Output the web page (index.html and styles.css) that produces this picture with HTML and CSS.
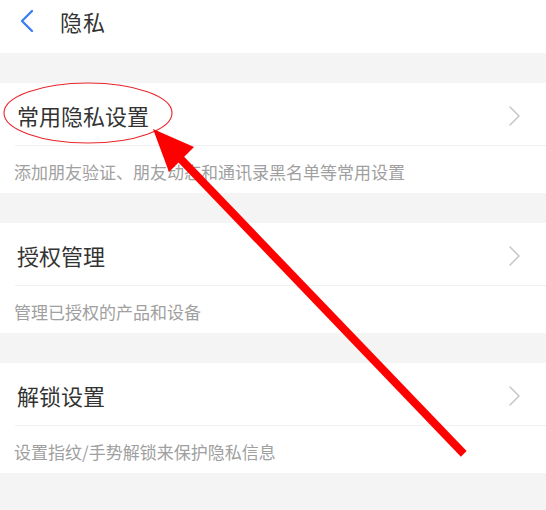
FILE: index.html
```html
<!DOCTYPE html>
<html lang="zh-CN">
<head>
<meta charset="utf-8">
<title>隐私</title>
<link rel="stylesheet" href="styles.css">
</head>
<body>
<div class="page">
  <header class="nav">
    <svg class="back" width="16" height="24" viewBox="0 0 16 24"><path d="M13 2 L3 12 L13 22" fill="none" stroke="#3d7ff5" stroke-width="2.4" stroke-linecap="round" stroke-linejoin="round"/></svg>
    <h1 class="nav-title">隐私</h1>
  </header>
  <div class="gap"></div>
  <section class="group">
    <div class="row"><span class="row-title">常用隐私设置</span><svg class="chev" width="14" height="22" viewBox="0 0 14 22"><path d="M2 2 L11 11 L2 20" fill="none" stroke="#c8c8c8" stroke-width="1.6" stroke-linecap="round" stroke-linejoin="round"/></svg></div>
    <div class="desc">添加朋友验证、朋友动态和通讯录黑名单等常用设置</div>
  </section>
  <div class="gap"></div>
  <section class="group">
    <div class="row"><span class="row-title">授权管理</span><svg class="chev" width="14" height="22" viewBox="0 0 14 22"><path d="M2 2 L11 11 L2 20" fill="none" stroke="#c8c8c8" stroke-width="1.6" stroke-linecap="round" stroke-linejoin="round"/></svg></div>
    <div class="desc">管理已授权的产品和设备</div>
  </section>
  <div class="gap"></div>
  <section class="group">
    <div class="row"><span class="row-title">解锁设置</span><svg class="chev" width="14" height="22" viewBox="0 0 14 22"><path d="M2 2 L11 11 L2 20" fill="none" stroke="#c8c8c8" stroke-width="1.6" stroke-linecap="round" stroke-linejoin="round"/></svg></div>
    <div class="desc">设置指纹/手势解锁来保护隐私信息</div>
  </section>
  <div class="gap last"></div>
  <svg class="annot" width="546" height="510" viewBox="0 0 546 510">
    <ellipse cx="88" cy="113" rx="84" ry="30" fill="none" stroke="#e8262b" stroke-width="1.1"/>
    <line x1="175" y1="153" x2="461" y2="451" stroke="#ff0000" stroke-width="8" stroke-linecap="square"/>
    <polygon points="153,129 194,147 169,172" fill="#ff0000"/>
  </svg>
</div>
</body>
</html>
```

FILE: styles.css
```css
* { box-sizing: border-box; margin: 0; padding: 0; }
html, body { width: 546px; height: 510px; overflow: hidden; }
body {
  background: #f4f4f4;
  font-family: "Noto Sans CJK SC", "Noto Sans", sans-serif;
}
.page { position: relative; width: 546px; height: 510px; }
.nav {
  height: 53px;
  background: #fff;
  display: flex;
  align-items: flex-start;
  padding-left: 19px;
  padding-top: 9px;
}
.back { display: block; margin-right: 25px; }
.nav-title {
  font-size: 22px;
  font-weight: normal;
  color: #333;
  letter-spacing: 1px;
  line-height: 24px;
}
.gap { height: 30px; background: #f4f4f4; }
.gap.last { height: 37px; }
.group { background: #fff; height: 110px; }
.row {
  height: 63px;
  margin-left: 15px;
  border-bottom: 1px solid #f0f0f0;
  display: flex;
  align-items: center;
  justify-content: space-between;
  padding-left: 2px;
  padding-right: 24px;
}
.row-title { font-size: 22px; color: #333; line-height: 1; margin-top: 2px; }
.chev { display: block; margin-top: 4px; }
.desc {
  height: 46px;
  padding-left: 14px;
  display: flex;
  align-items: center;
  font-size: 17px;
  color: #a0a0a0;
  padding-top: 4px;
}
.annot { position: absolute; left: 0; top: 0; pointer-events: none; }
```
